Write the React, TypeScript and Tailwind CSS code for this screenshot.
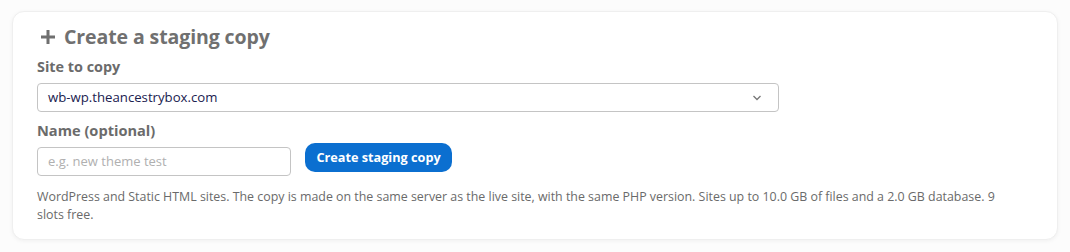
import React from "react";

export default function App() {
  const font = { fontFamily: '"Open Sans", "Noto Sans", sans-serif' };
  return (
    <div className="w-[1070px] h-[252px] bg-[#fcfcfc] pt-[11px] pl-[12px]" style={font}>
      <div className="w-[1046px] h-[229px] bg-white rounded-[12px] border border-[#efefef] shadow-[0_1px_4px_rgba(0,0,0,0.05)] pl-[24px] pr-[24px] pt-[11px]">
        <div className="flex items-center gap-[8px] h-[28px]">
          <svg width="16" height="16" viewBox="0 0 16 16" className="ml-[3px]">
            <path d="M8 1v14M1 8h14" stroke="#6f6f6f" strokeWidth="3" strokeLinecap="butt" />
          </svg>
          <span className="text-[19.5px] font-bold text-[#707070] leading-[28px] tracking-[-0.1px]">Create a staging copy</span>
        </div>
        <div className="mt-[6px] text-[14.4px] font-bold text-[#6b6b6b] leading-[20px]">Site to copy</div>
        <div className="mt-[6px] w-[742px] h-[29px] border border-[#c4c4c4] rounded-[4px] flex items-center justify-between pl-[10px] pr-[16px]">
          <span className="text-[13.2px] text-[#20214f]">wb-wp.theancestrybox.com</span>
          <svg width="10" height="6" viewBox="0 0 10 6">
            <path d="M1.5 1l3.5 3.5L8.5 1" fill="none" stroke="#777" strokeWidth="1.3" />
          </svg>
        </div>
        <div className="mt-[8px] text-[14.6px] font-bold text-[#6b6b6b] leading-[20px]">Name (optional)</div>
        <div className="mt-[3px] flex items-start gap-[14px]">
          <div className="mt-[4px] w-[254px] h-[29px] border border-[#c4c4c4] rounded-[4px] flex items-center pl-[10px]">
            <span className="text-[13px] text-[#b0b0b0]">e.g. new theme test</span>
          </div>
          <button className="h-[29px] w-[147px] rounded-[10px] bg-[#0b6fd0] text-white text-[12.7px] font-bold">
            Create staging copy
          </button>
        </div>
        <p className="mt-[12px] w-[985px] text-[12.4px] leading-[18px] text-[#6a6a6a]">
          WordPress and Static HTML sites. The copy is made on the same server as the live site, with the same PHP version. Sites up to 10.0 GB of files and a 2.0 GB database. 9 slots free.
        </p>
      </div>
    </div>
  );
}
